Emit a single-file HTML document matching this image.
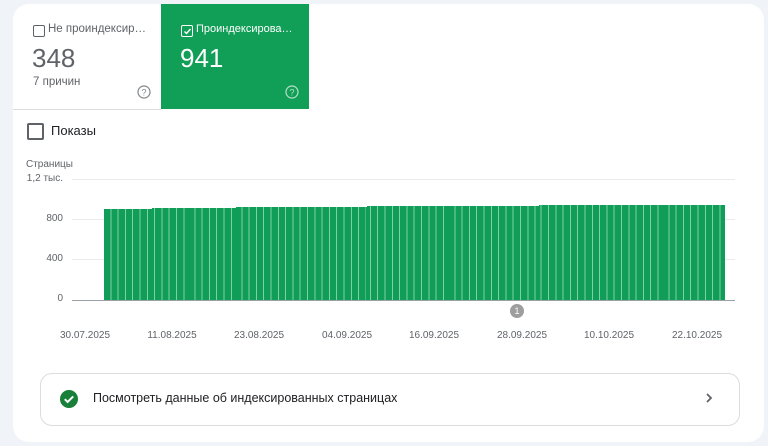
<!DOCTYPE html>
<html><head><meta charset="utf-8"><style>
body{margin:0;width:768px;height:446px;background:#f0f3f8;font-family:"Liberation Sans",Roboto,sans-serif;position:relative;overflow:hidden}
.card{position:absolute;left:13px;top:4px;width:751px;height:438px;background:#fff;border-radius:16px;overflow:hidden}
.a{position:absolute}
.t{font-size:11.5px;color:#5f6368}
.cb{position:absolute;width:10px;height:10px;border:1.5px solid #5f6368;border-radius:2px}
.bars{position:absolute;background:repeating-linear-gradient(90deg,#0f9d58 0 6.3px,#7fd0a6 6.3px 7.3px)}
.gl{position:absolute;left:72px;width:663px;height:1px;background:#e8eaed}
.yl{position:absolute;font-size:10px;color:#5f6368;right:701px;text-align:right}
.xl{position:absolute;top:326px;font-size:10px;color:#5f6368;width:70px;text-align:center}
</style></head><body>
<div class="card">
 <div class="a" style="left:0;top:105px;width:148px;height:1px;background:#dadce0"></div>
 <div class="cb" style="left:20px;top:21px"></div>
 <div class="a t" style="left:35px;top:19px">Не проиндексир…</div>
 <div class="a" style="left:19px;top:39px;font-size:26px;color:#5f6368">348</div>
 <div class="a t" style="left:20px;top:72px">7 причин</div>
 <svg class="a" style="left:124px;top:81px" width="14" height="14" viewBox="0 0 14 14"><circle cx="7" cy="7" r="6" fill="none" stroke="#80868b" stroke-width="1.2"/><text x="7" y="10.5" font-size="9" text-anchor="middle" fill="#80868b" font-family="Liberation Sans">?</text></svg>
 <div class="a" style="left:148px;top:0;width:148px;height:105px;background:#119f57"></div>
 <div class="cb" style="left:168px;top:21px;border-color:#fff"></div>
 <svg class="a" style="left:169px;top:22px" width="11" height="11"><path d="M2.5 5.5l2 2 4-4.5" fill="none" stroke="#fff" stroke-width="1.4"/></svg>
 <div class="a" style="left:183px;top:19px;font-size:11px;color:#fff">Проиндексирова…</div>
 <div class="a" style="left:167px;top:39px;font-size:26px;color:#fff">941</div>
 <svg class="a" style="left:272px;top:81px" width="14" height="14" viewBox="0 0 14 14"><circle cx="7" cy="7" r="6" fill="none" stroke="#b7e1c9" stroke-width="1.2"/><text x="7" y="10.5" font-size="9" text-anchor="middle" fill="#b7e1c9" font-family="Liberation Sans">?</text></svg>
 <div class="a" style="left:14px;top:119px;width:13px;height:13px;border:2px solid #5f6368;border-radius:2px"></div>
 <div class="a" style="left:38px;top:119px;font-size:13px;color:#202124">Показы</div>
 <div class="a" style="left:13px;top:155px;font-size:10px;color:#5f6368">Страницы</div>
 <div class="gl" style="top:175px;left:59px"></div>
 <div class="gl" style="top:215px;left:59px"></div>
 <div class="gl" style="top:255px;left:59px"></div>
 <div class="yl" style="top:169px">1,2 тыс.</div>
 <div class="yl" style="top:209px">800</div>
 <div class="yl" style="top:249px">400</div>
 <div class="yl" style="top:289px">0</div>
 <div class="bars" style="left:91px;top:205px;width:48px;height:91px"></div>
 <div class="bars" style="left:139px;top:204px;width:84px;height:92px;background-position:-48px 0"></div>
 <div class="bars" style="left:223px;top:203px;width:131px;height:93px;background-position:-132px 0"></div>
 <div class="bars" style="left:354px;top:202px;width:172px;height:94px;background-position:-263px 0"></div>
 <div class="bars" style="left:526px;top:201px;width:186px;height:95px;background-position:-435px 0"></div>
 <div class="a" style="left:59px;top:296px;width:663px;height:1px;background:#9aa0a6"></div>
 <div class="a" style="left:497px;top:300px;width:14px;height:14px;border-radius:50%;background:#9e9e9e;color:#fff;font-size:9px;text-align:center;line-height:14px">1</div>
 <div class="xl" style="left:37px">30.07.2025</div>
 <div class="xl" style="left:124px">11.08.2025</div>
 <div class="xl" style="left:211px">23.08.2025</div>
 <div class="xl" style="left:299px">04.09.2025</div>
 <div class="xl" style="left:386px">16.09.2025</div>
 <div class="xl" style="left:474px">28.09.2025</div>
 <div class="xl" style="left:561px">10.10.2025</div>
 <div class="xl" style="left:649px">22.10.2025</div>
 <div class="a" style="left:27px;top:369px;width:698px;height:51px;border:1px solid #dadce0;border-radius:12px"></div>
 <svg class="a" style="left:47px;top:386px" width="18" height="18"><circle cx="9" cy="9" r="9" fill="#188038"/><path d="M4.8 9.2l2.8 2.8 5.6-5.6" fill="none" stroke="#fff" stroke-width="2"/></svg>
 <div class="a" style="left:80px;top:387px;font-size:12.5px;color:#202124">Посмотреть данные об индексированных страницах</div>
 <svg class="a" style="left:690px;top:388px" width="12" height="12"><path d="M4 2l4 4-4 4" fill="none" stroke="#5f6368" stroke-width="1.8"/></svg>
</div>
</body></html>
